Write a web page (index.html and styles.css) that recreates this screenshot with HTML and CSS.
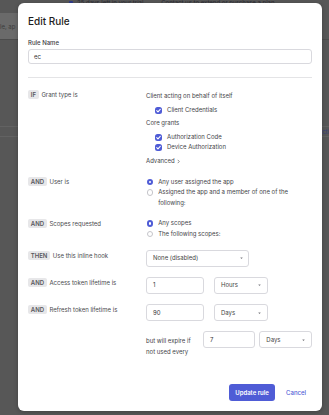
FILE: index.html
```html
<!DOCTYPE html>
<html lang="en">
<head>
<meta charset="utf-8">
<title>Edit Rule</title>
<link rel="stylesheet" href="styles.css">
</head>
<body>
<div class="page">
  <div class="trial"><span class="trial-icon"></span><span>25 days left in your trial.</span><span class="trial-link">Contact us to extend or purchase a plan</span></div>
  <div class="topbar"><div class="search">le, ap</div></div>
  <div class="side-row"><span class="side-link">cti</span></div>
</div>

<div class="modal">
  <h1 class="title">Edit Rule</h1>
  <div class="field-label">Rule Name</div>
  <div class="text-input wide">ec</div>
  <div class="divider"></div>

  <div class="rules">
    <div class="rule">
      <div class="cond"><span class="badge">IF</span><span>Grant type is</span></div>
      <div class="opts grant">
        <div class="group-label">Client acting on behalf of itself</div>
        <div class="checks">
          <div class="check"><span class="box"><svg viewBox="0 0 8 8"><path d="M2 4.1 L3.4 5.5 L6 2.7"/></svg></span>Client Credentials</div>
        </div>
        <div class="group-label">Core grants</div>
        <div class="checks">
          <div class="check"><span class="box"><svg viewBox="0 0 8 8"><path d="M2 4.1 L3.4 5.5 L6 2.7"/></svg></span>Authorization Code</div>
          <div class="check"><span class="box"><svg viewBox="0 0 8 8"><path d="M2 4.1 L3.4 5.5 L6 2.7"/></svg></span>Device Authorization</div>
        </div>
        <div class="advanced">Advanced <svg class="chev" viewBox="0 0 4 6"><path d="M1 0.8 L3 3 L1 5.2"/></svg></div>
      </div>
    </div>

    <div class="rule">
      <div class="cond"><span class="badge">AND</span><span>User is</span></div>
      <div class="opts">
        <div class="radio-row"><span class="radio on"></span><span>Any user assigned the app</span></div>
        <div class="radio-row"><span class="radio"></span><span class="radio-text">Assigned the app and a member of one of the following:</span></div>
      </div>
    </div>

    <div class="rule">
      <div class="cond"><span class="badge">AND</span><span>Scopes requested</span></div>
      <div class="opts">
        <div class="radio-row"><span class="radio on"></span><span>Any scopes</span></div>
        <div class="radio-row"><span class="radio"></span><span>The following scopes:</span></div>
      </div>
    </div>

    <div class="rule">
      <div class="cond"><span class="badge">THEN</span><span>Use this inline hook</span></div>
      <div class="opts">
        <div class="select hook"><span>None (disabled)</span><svg class="caret" viewBox="0 0 4 3"><path d="M0.3 0.5 L3.7 0.5 L2 2.6 Z"/></svg></div>
      </div>
    </div>

    <div class="rule">
      <div class="cond"><span class="badge">AND</span><span>Access token lifetime is</span></div>
      <div class="opts">
        <div class="pair">
          <div class="text-input num">1</div>
          <div class="select unit"><span>Hours</span><svg class="caret" viewBox="0 0 4 3"><path d="M0.3 0.5 L3.7 0.5 L2 2.6 Z"/></svg></div>
        </div>
      </div>
    </div>

    <div class="rule">
      <div class="cond"><span class="badge">AND</span><span>Refresh token lifetime is</span></div>
      <div class="opts">
        <div class="pair">
          <div class="text-input num">90</div>
          <div class="select unit"><span>Days</span><svg class="caret" viewBox="0 0 4 3"><path d="M0.3 0.5 L3.7 0.5 L2 2.6 Z"/></svg></div>
        </div>
        <div class="expire">
          <div class="expire-text">but will expire if not used every</div>
          <div class="text-input exp-num">7</div>
          <div class="select exp-unit"><span>Days</span><svg class="caret" viewBox="0 0 4 3"><path d="M0.3 0.5 L3.7 0.5 L2 2.6 Z"/></svg></div>
        </div>
      </div>
    </div>
  </div>

  <div class="footer">
    <button class="primary">Update rule</button>
    <button class="link">Cancel</button>
  </div>
</div>
</body>
</html>
```
FILE: styles.css
```css
* { box-sizing: border-box; margin: 0; padding: 0; }
html, body { width: 329px; height: 415px; overflow: hidden; }
body {
  background: #575757;
  font-family: Inter, "Noto Sans", "Liberation Sans", sans-serif;
  position: relative;
  color: #444;
}

/* dimmed page behind the dialog */
.page { height: 415px; display: flex; flex-direction: column; }
.trial {
  height: 13px;
  padding-left: 69px;
  display: flex;
  align-items: flex-start;
  gap: 4px;
  font-size: 6px;
  line-height: 6px;
  color: #2c2c34;
}
.trial-icon { width: 4px; height: 5px; background: #2f3a8a; border-radius: 1px; margin-top: 0.5px; }
.trial-link { margin-left: 12px; }
.topbar {
  height: 27px;
  border-bottom: 1px solid #4c4c4c;
  display: flex;
  align-items: stretch;
}
.search {
  width: 90px;
  background: #6a6a6a;
  font-size: 6px;
  line-height: 27px;
  color: #3c3c3c;
}
.side-row {
  margin-top: 86px;
  height: 11px;
  border-top: 1px solid #626262;
  border-bottom: 1px solid #626262;
  display: flex;
  justify-content: flex-end;
  align-items: center;
  font-size: 6px;
  color: #3a4178;
}

/* dialog */
.modal {
  position: absolute;
  left: 18px;
  top: 3px;
  width: 304px;
  height: 408px;
  background: #fff;
  border-radius: 6px;
  box-shadow: 0 1px 4px rgba(0,0,0,0.25);
  padding: 11.5px 10px 10px;
  display: flex;
  flex-direction: column;
}
.title {
  font-size: 10px;
  line-height: 12px;
  font-weight: 500;
  color: #1d1d21;
}
.field-label {
  margin-top: 12.8px;
  font-size: 6px;
  line-height: 8px;
  font-weight: 500;
  color: #3b3b3f;
}
.text-input {
  height: 17px;
  border: 1px solid #d9d9de;
  border-radius: 3px;
  padding: 0 6px;
  display: flex;
  align-items: center;
  font-size: 6px;
  color: #333;
}
.text-input.wide { margin-top: 1.6px; height: 15px; padding: 0 5px; }
.divider { margin-top: 13.5px; height: 1px; background: #e4e4e6; }

.rules {
  margin-top: 10.5px;
  display: flex;
  flex-direction: column;
  gap: 10.3px;
}
.rule {
  display: grid;
  grid-template-columns: 118px 1fr;
}
.cond {
  display: flex;
  align-items: center;
  gap: 2.6px;
  height: 10.5px;
  font-size: 6px;
  color: #4a4a4e;
}
.badge {
  height: 9px;
  line-height: 9px;
  padding: 0 2.8px;
  border-radius: 2px;
  background: #e7e7e9;
  font-size: 6px;
  font-weight: 600;
  color: #57575c;
}
.opts {
  font-size: 6px;
  line-height: 10.5px;
  color: #444448;
}
.opts.grant { padding-top: 2.5px; }
.group-label { margin-bottom: 3px; }
.checks { padding-left: 9px; margin-bottom: 3px; }
.check { display: flex; align-items: center; gap: 5px; height: 10.5px; }
.box {
  width: 7px;
  height: 7px;
  border-radius: 2.5px;
  background: #4f5cd6;
  display: flex;
}
.box svg { width: 7px; height: 7px; fill: none; stroke: #fff; stroke-width: 1.3; stroke-linecap: round; stroke-linejoin: round; }
.advanced { display: flex; align-items: center; gap: 2px; }
.chev { width: 3px; height: 5px; fill: none; stroke: #444; stroke-width: 0.8; }

.radio-row { display: flex; align-items: flex-start; gap: 5px; }
.radio {
  flex: none;
  width: 6.5px;
  height: 6.5px;
  margin-top: 2px;
  margin-left: 0.7px;
  border-radius: 50%;
  border: 1px solid #c5c5ca;
  background: #fff;
}
.radio.on { border: 2px solid #4f5cd6; background: #fff; }
.radio-text { max-width: 148px; }

.select {
  height: 17px;
  border: 1px solid #d9d9de;
  border-radius: 3px;
  padding: 0 5.5px 0 6px;
  display: flex;
  align-items: center;
  justify-content: space-between;
  font-size: 6px;
  color: #444;
}
.caret { width: 3px; height: 2.5px; fill: #77777c; }
.select.hook { width: 103px; }
.pair { display: flex; gap: 9.7px; }
.num { width: 58.3px; }
.unit { width: 53.7px; }

.expire { margin-top: 10px; display: flex; align-items: flex-start; }
.expire-text { width: 57px; padding-top: 3.2px; line-height: 11px; padding-right: 8px; }
.exp-num { width: 52.3px; }
.exp-unit { width: 52.7px; margin-left: 4px; }

.footer {
  margin-top: auto;
  display: flex;
  justify-content: flex-end;
  align-items: center;
}
button { font-family: inherit; border: none; cursor: pointer; }
.primary {
  width: 45.4px;
  height: 17px;
  border-radius: 3px;
  background: #4f5cd6;
  color: #fff;
  font-size: 6px;
  font-weight: 600;
}
.link {
  background: none;
  color: #4f5cd6;
  font-size: 6px;
  font-weight: 500;
  padding: 0 6px;
  margin-left: 5.3px;
  height: 17px;
}
```
